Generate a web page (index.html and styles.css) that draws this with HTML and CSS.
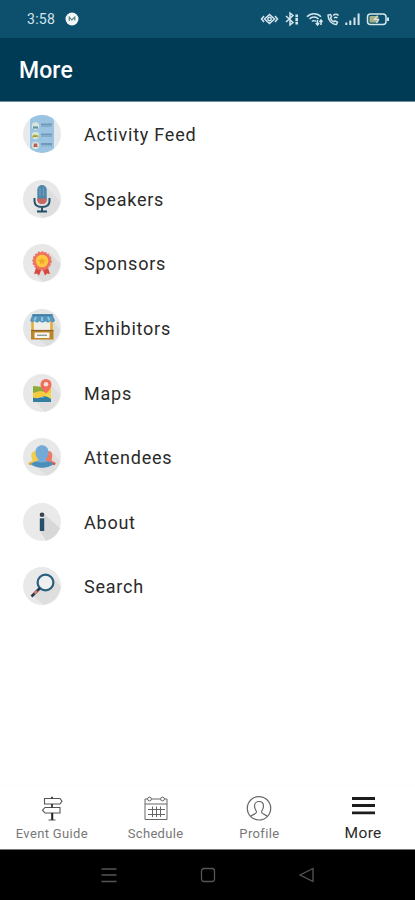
FILE: index.html
```html
<!DOCTYPE html>
<html lang="en">
<head>
<meta charset="utf-8">
<title>More</title>
<link rel="stylesheet" href="styles.css">
</head>
<body>
<div class="screen">
  <div class="status">
    <span class="time">3:58</span>
    <svg class="app-dot" viewBox="0 0 14 14"><circle cx="7" cy="7" r="6.500" fill="#f4f9fb"/><path d="M4.200 9V5l2.600 3L9.800 5v3.500" fill="none" stroke="#577f85" stroke-width="1.100"/></svg>
    <svg class="status-icons" viewBox="0 0 130 18" fill="none" stroke="#d5e5ec" stroke-width="1.500">
      <path d="M4 6L1.500 9 4 12M15 6l2.500 3-2.500 3M4.500 9l5-4.500 5 4.500-5 4.500z"/><circle cx="9.500" cy="9" r="1.700"/>
      <path d="M26 6l7 6.500-3 2.500V3l3 2.500-7 6.500"/><path d="M36.700 4.500v10" stroke-width="2.600" stroke-dasharray="2.800 .8"/>
      <path d="M47 6.800c4-4 10-4 14 0M49.500 9c2.500-2.600 6.500-2.600 9 0M52 11.500c1-1 3-1 4 0M57.500 10v5M55.800 13l1.700 2 1.700-2M61 15v-5M59.500 12l1.500-2 1.500 2"/>
      <path d="M68 5c0 5 3.500 9.500 8.500 9.500l1-2.500-2.500-1.200-1.200 1C72 11 71 9.500 70.500 8l1-1.500-1-2zM73 5.500c2-1.500 4-1.500 5.500 0M74 8c1-.8 2.500-.8 3.500 0"/>
      <path d="M86.300 12.500v2.500M90.300 10.500V15M94.500 7.500V15M98.600 3.500V15" stroke-width="2"/>
      <rect x="107.500" y="4" width="18.500" height="10.500" rx="3"/><path d="M128 7.500v3.500" stroke-width="2"/>
      <rect x="109.500" y="6" width="9" height="6.500" rx="1" fill="#a9b184" stroke="none"/><path d="M117.500 5.500l-3 4h4l-2 3.500" stroke-width="1.200"/>
    </svg>
  </div>
  <header class="title">More</header>
  <ul class="menu">
    <li><svg class="icon" viewBox="0 0 38 38"><circle cx="19" cy="19" r="19" fill="#e7e9ea"/><path d="M7 5q0-1.500 3-2.700Q19-2.500 28 2.300q3 1.200 3 3.700v26q0 2-2 3-10 6-20 0-2-1-2-3z" fill="#9ac4e2"/><g fill="#d7e6db"><circle cx="12.500" cy="11" r="3.700"/><circle cx="12.500" cy="20.500" r="3.700"/><circle cx="12.500" cy="30.500" r="3.700"/></g><path d="M10 12.500h5" stroke="#6393a5" stroke-width="2.200"/><path d="M9.500 22l2-1.500 4 1" stroke="#b8ab3a" stroke-width="2"/><path d="M10 32q2.500-3 5 0" fill="#c8483f"/><path d="M12.500 28.500v3.500" stroke="#c05b50" stroke-width="3.500"/><path d="M18 9.500h11M18 19.500h11M18 29h11" stroke="#7199b5" stroke-width="2"/><path d="M18 11.500h10M18 21.500h11M18 31h11" stroke="#83abc5" stroke-width="1"/></svg><span>Activity Feed</span></li>
    <li><svg class="icon" viewBox="0 0 38 38"><circle cx="19" cy="19" r="19" fill="#e8e8e8"/><path d="M23 7l14.500 14Q35 35 20 38l-7-7z" fill="#dedede"/><path d="M11.500 18v3q0 6 7.500 6t7.500-6v-3M19 27v4" fill="none" stroke="#28556e" stroke-width="2"/><rect x="14.300" y="5" width="9.400" height="19" rx="4.700" fill="#4f87ad"/><path d="M17 8v8M20.500 8v8" stroke="#74a0bd"/><path d="M14.300 18.500h9.400v2Q23 24 19 24t-4.700-3.500z" fill="#cb665c"/><path d="M14 31.500h10" stroke="#214f6b" stroke-width="2"/></svg><span>Speakers</span></li>
    <li><svg class="icon" viewBox="0 0 38 38"><circle cx="19" cy="19" r="19" fill="#e8e8e8"/><path d="M26 8l11.500 12Q34 35 20 38l-8-8z" fill="#dcdcdc"/><path d="M14 21l-3 9 3-.5 2 2 3-7.500 3 7.500 2-2 3 .5-3-9z" fill="#d6493f"/><circle cx="19" cy="17" r="8.900" fill="#ed7161" stroke="#ed7161" stroke-width="1.500" stroke-dasharray="2.200 1.200"/><circle cx="19" cy="17" r="6.300" fill="#ffc83f"/><path d="M19 13.300l1.100 2.400 2.700.3-2 1.800.6 2.700-2.400-1.400-2.400 1.400.6-2.700-2-1.800 2.700-.3z" fill="#eda72e"/></svg><span>Sponsors</span></li>
    <li><svg class="icon" viewBox="0 0 38 38"><circle cx="19" cy="19" r="19" fill="#e5e6e7"/><path d="M30 12l7 9q-3 11-13 16l-7-6z" fill="#dbdddd"/><path d="M9.500 12v11M28.500 12v11" stroke="#e6ad35" stroke-width="2.500"/><path d="M11 13h16v9H11z" fill="#f0eee8"/><path d="M9.500 5.500h20l2.500 6q-2 3.500-4.500.5-2.500 3-5 0-3 3-6 0-2.500 3-5 0-2.500 2.500-4.500-.5z" fill="#5696bc"/><path d="M9.500 6h20" stroke="#39789f" stroke-width="1.500"/><path d="M13 8l-1.500 3.500M19 8v4M25 8l1.500 3.500" stroke="#8fc4de" stroke-width="2"/><path d="M8 21.500h22.500v9H8z" fill="#bd8526"/><path d="M8 21.500h22.500" stroke="#8c6130" stroke-width="1.200"/><path d="M11.500 23.500h15v5.500h-15z" fill="#f9f7ef"/><path d="M14 26.300h10" stroke="#909d9c" stroke-width="1.500"/></svg><span>Exhibitors</span></li>
    <li><svg class="icon" viewBox="0 0 38 38"><circle cx="19" cy="19" r="19" fill="#e8e8e8"/><path d="M29 12l8.500 9Q33 35 22 38l-9-10z" fill="#dfdfdf"/><path d="M10 12l9 1 9-1v16H10z" fill="#f7cb3f"/><path d="M10 12l9 1 3 5-5-1-7 2z" fill="#8cad3d"/><path d="M23 20l5-1v5h-5z" fill="#f2d74d"/><path d="M10 23.500q5 1.500 9-.5t9 2V28H10z" fill="#347da3"/><path d="M16 24q3-2 6 0z" fill="#67acd0"/><path d="M23 19.500q-5.500-5-5.500-9a5.500 5.500 0 0 1 11 0q0 4-5.500 9z" fill="#ef6e5c"/><circle cx="23" cy="10.300" r="2.300" fill="#f4dfda"/></svg><span>Maps</span></li>
    <li><svg class="icon" viewBox="0 0 38 38"><circle cx="19" cy="19" r="19" fill="#e8e8e8"/><path d="M28 13l9.500 10Q34 35 23 38L12 27z" fill="#dedede"/><path d="M5.500 26q0-2 4-3.500-3-7 1-9 3-1.500 5 2v11z" fill="#f2ce4d"/><path d="M32.500 26q0-2-4-3.500 2-7-1-9-3-1.500-5 2v11z" fill="#ef7966"/><path d="M5.500 24.800H15v2.200H6z" fill="#e3a43d"/><path d="M23 24.800h9.500l-.5 2.200h-9z" fill="#db5647"/><path d="M12.500 14c0-9 13-9 13 0 0 4-1.500 6-3 7.500 0 2 7.500 2 7.500 5.500q-5 3-11 3t-11-3c0-3.500 7.500-3.500 7.500-5.500-1.500-1.500-3-3.500-3-7.500z" fill="#74aad8"/><path d="M8 26q2-2 5-2.500 6 2 12 0 4 .5 5 2.500-10 7-22 0z" fill="#498db8"/></svg><span>Attendees</span></li>
    <li><svg class="icon" viewBox="0 0 38 38"><circle cx="19" cy="19" r="19" fill="#eaeaea"/><path d="M21 11l16 14q-4 10-14 13l-6-10z" fill="#d8d8d8"/><circle cx="19" cy="11.700" r="2.300" fill="#39404e"/><path d="M16.800 15.300h4.400V28h-4.400z" fill="#244e69"/></svg><span>About</span></li>
    <li><svg class="icon" viewBox="0 0 38 38"><circle cx="19" cy="19" r="19" fill="#e9e9e9"/><path d="M30 10l8 10Q35 34 21 38l-11-9z" fill="#dedede"/><circle cx="22.500" cy="15.500" r="7.900" fill="#eef0f0" stroke="#286080" stroke-width="2.200"/><path d="M17 21l-8.500 8.500" stroke="#263b50" stroke-width="2.600"/><path d="M14 24l-2.500 2.500" stroke="#d57867" stroke-width="2.600"/></svg><span>Search</span></li>
  </ul>
  <nav class="tabs">
    <div class="tab"><svg viewBox="0 0 26 26" fill="none" stroke="#555" stroke-width="1.100"><path d="M5.500 2.500H21l2 2.700-2 2.800H5.500zM21 11.500H6l-2.500 2.700L6 17h15zM9.500 24h7"/><path d="M13 .8v1.700M13 8v3.500" stroke="#222" stroke-width="1.600"/><path d="M13.200 17V24" stroke="#222" stroke-width="2"/></svg><span>Event Guide</span></div>
    <div class="tab"><svg viewBox="0 0 26 26" fill="none" stroke="#666"><path d="M4.500 3H2v20.500h22V3h-2.500M8.500 3h9M2 8h22M5 13.500h17M5 18.500h17M9.500 10.500V21M13.500 10.500V21M17.500 10.500V21"/><circle cx="6.500" cy="3" r="1.900"/><circle cx="19.500" cy="3" r="1.900"/></svg><span>Schedule</span></div>
    <div class="tab"><svg viewBox="0 0 26 26" fill="none" stroke="#666" stroke-width="1.200"><circle cx="13" cy="12.300" r="11.700"/><path d="M4.500 20.500c1.500-2.500 6-2 6-4.500 0-1.500-2-2.500-2-6 0-6 9-6 9 0 0 3.500-2 4.500-2 6 0 2.500 4.500 2 6 4.500"/></svg><span>Profile</span></div>
    <div class="tab active"><svg viewBox="0 0 26 26" stroke="#1c1c1c" stroke-width="2.800"><path d="M2 2.500h23M2 9.500h23M2 16.800h23"/></svg><span>More</span></div>
  </nav>
  <div class="system">
    <svg viewBox="0 0 18 18" fill="none" stroke="#555" stroke-width="1.500"><path d="M1.500 3h15M1.500 9h15M1.500 15.500h15"/></svg>
    <svg viewBox="0 0 18 18" fill="none" stroke="#555" stroke-width="1.300"><rect x="2.500" y="2.500" width="13" height="13" rx="2.500"/></svg>
    <svg viewBox="0 0 18 18" fill="none" stroke="#555" stroke-width="1.300"><path d="M2 9l13-6.500v13z"/></svg>
  </div>
</div>
</body>
</html>
```
FILE: styles.css
```css
* { box-sizing: border-box; }
body { margin: 0; font-family: Roboto, "Liberation Sans", sans-serif; background: #fff; }
.screen { width: 415px; height: 900px; display: flex; flex-direction: column; overflow: hidden; }
.status { height: 38px; background: #0d506e; display: flex; align-items: center; padding: 0 25px 0 27px; color: #d5e5ec; }
.time { font-size: 14px; width: 38px; letter-spacing: .3px; }
.app-dot { width: 14px; height: 14px; }
.status-icons { width: 130px; height: 18px; margin-left: auto; }
.title { height: 64px; background: #003b56; border-bottom: 1px solid #6f909e; color: #fff; font-size: 23px; font-weight: 500; line-height: 66px; padding-left: 19px; letter-spacing: .1px; }
.menu { list-style: none; margin: 0; padding: 0; flex: 1; }
.menu li { height: 64.6px; display: flex; align-items: center; padding-left: 23px; gap: 23px; font-size: 18px; letter-spacing: .77px; color: #2a2a2a; }
.menu span { padding-top: 1px; }
.icon { width: 38px; height: 38px; flex: none; }
.tabs { height: 65px; background: #fff; border-top: 1px solid #fcfcfc; border-bottom: 1px solid #777; display: grid; grid-template-columns: repeat(4, 1fr); padding-top: 10px; }
.tab { display: flex; flex-direction: column; align-items: center; font-size: 13px; line-height: 16px; letter-spacing: .34px; color: #777; gap: 4px; }
.tab svg { width: 26px; height: 26px; }
.tab.active { font-size: 15.5px; color: #2a2a2a; gap: 3px; }
.system { height: 50px; background: #000; display: flex; justify-content: center; align-items: center; gap: 81px; }
.system svg { width: 18px; height: 18px; }
```
